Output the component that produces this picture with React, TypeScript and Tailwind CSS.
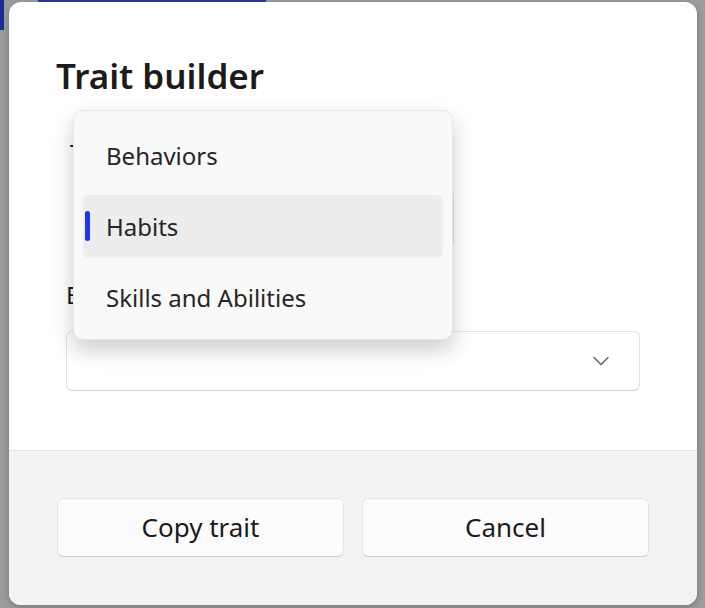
import { ChevronDown } from "lucide-react";

const font = { fontFamily: '"Noto Sans", "Open Sans", sans-serif' };

export default function App() {
  return (
    <div className="relative w-[705px] h-[608px] bg-[#9c9c9c] overflow-hidden" style={font}>
      {/* window behind the dialog */}
      <div className="absolute left-0 top-0 w-[4px] h-[30px] bg-[#1c2c8c]" />
      <div className="absolute left-[38px] top-0 w-[228px] h-[2px] bg-[#2a3a9a]" />

      <div className="relative ml-[9px] mt-[2px] w-[688px] h-[603px] rounded-[12px] bg-white shadow-[0_2px_6px_rgba(0,0,0,0.25)] flex flex-col overflow-hidden">
        {/* Body */}
        <div className="h-[448px] pl-[47px] pr-[57px] pt-[52px]">
          <h1 className="text-[35px] leading-[44px] font-semibold text-[#1b1b1b]">Trait builder</h1>

          <div className="pl-[10px] mt-[42px] text-[#1b1b1b]">
            <div className="pl-[4px] text-[24px] leading-[26px]">Trait type</div>
            <div className="mt-[23px] ml-[8px] w-[380px] h-[60px] rounded-[6px] border border-[#e3e3e3] bg-[#fbfbfb]" />
            <div className="mt-[33px] text-[24px] leading-[26px]">Existing trait</div>
            <div className="mt-[23px] h-[60px] rounded-[6px] border border-[#e3e3e3] border-b-[#d0d0d0] bg-white flex items-center justify-end pr-[24px]">
              <ChevronDown size={28} strokeWidth={1.2} className="text-[#5f5f5f]" />
            </div>
          </div>
        </div>

        {/* Footer */}
        <div className="flex-1 bg-[#f3f3f3] border-t border-[#e5e5e5] flex items-start gap-[18px] px-[48px] pt-[47px]">
          <button className="w-[287px] h-[59px] rounded-[6px] bg-[#fbfbfb] border border-[#e5e5e5] border-b-[#cfcfcf] text-[26px] text-[#1b1b1b]">
            Copy trait
          </button>
          <button className="w-[287px] h-[59px] rounded-[6px] bg-[#fbfbfb] border border-[#e5e5e5] border-b-[#cfcfcf] text-[26px] text-[#1b1b1b]">
            Cancel
          </button>
        </div>

        {/* Open dropdown list */}
        <div className="absolute left-[64px] top-[108px] w-[380px] h-[230px] rounded-[10px] bg-[#f9f9f9] border border-[#e6e6e6] shadow-[0_10px_22px_rgba(0,0,0,0.2)] px-[9px] pt-[13px] flex flex-col gap-[8px]">
          {["Behaviors", "Habits", "Skills and Abilities"].map((item) => {
            const selected = item === "Habits";
            return (
              <div
                key={item}
                className={`relative h-[63px] rounded-[6px] flex items-center pl-[23px] text-[24px] text-[#262626] ${selected ? "bg-[#ededed]" : ""}`}
              >
                {selected && <span className="absolute left-[2px] top-[16px] w-[5px] h-[30px] rounded-full bg-[#1d35f5]" />}
                {item}
              </div>
            );
          })}
        </div>
      </div>
    </div>
  );
}
